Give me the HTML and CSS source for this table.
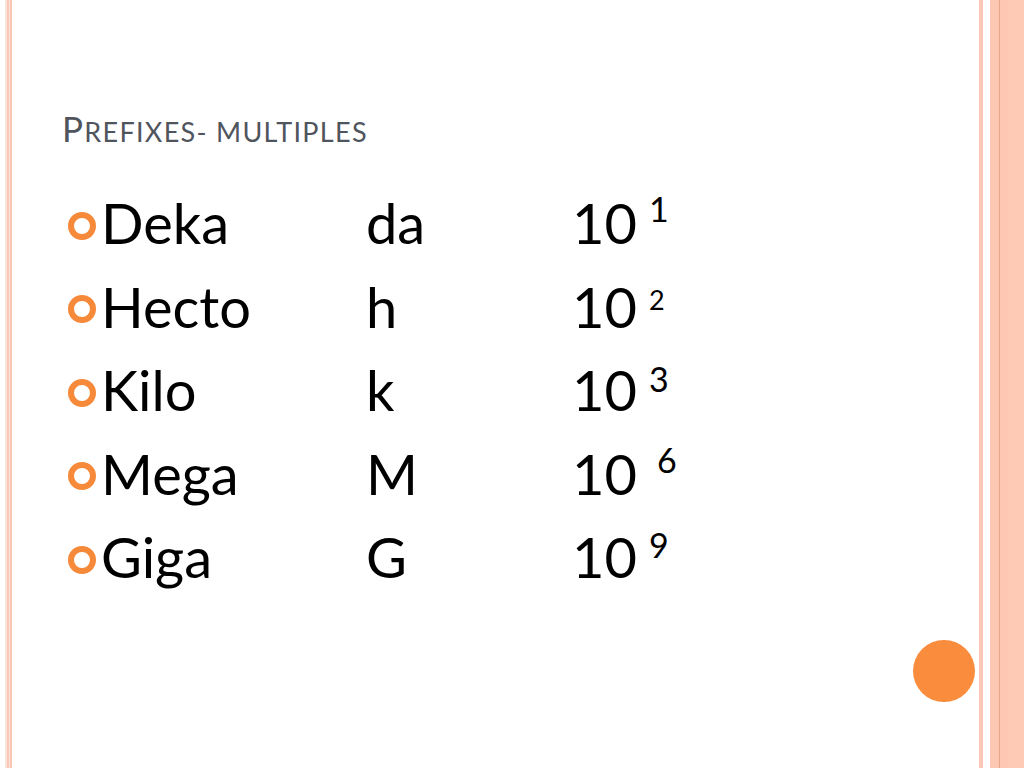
FILE: index.html
```html
<!DOCTYPE html>
<html>
<head>
<meta charset="utf-8">
<link rel="stylesheet" href="styles.css">
</head>
<body>
<div class="slide">
  <div class="edge-left"><span class="s1"></span><span class="s2"></span><span class="s3"></span><span class="s4"></span></div>
  <main class="content">
    <h1 class="title"><span class="big">P</span>refixes- multiples</h1>
    <ul class="list">
      <li class="row"><span class="name"><i class="dot"></i>Deka</span><span class="sym">da</span><span class="pow">10<sup class="e e1">1</sup></span></li>
      <li class="row"><span class="name"><i class="dot"></i>Hecto</span><span class="sym">h</span><span class="pow">10<sup class="e e2">2</sup></span></li>
      <li class="row"><span class="name"><i class="dot"></i>Kilo</span><span class="sym">k</span><span class="pow">10<sup class="e e3">3</sup></span></li>
      <li class="row"><span class="name"><i class="dot"></i>Mega</span><span class="sym">M</span><span class="pow">10<sup class="e e6">6</sup></span></li>
      <li class="row"><span class="name"><i class="dot"></i>Giga</span><span class="sym">G</span><span class="pow">10<sup class="e e9">9</sup></span></li>
    </ul>
  </main>
  <div class="corner"><span class="ball"></span></div>
  <div class="edge-right"><span class="r1"></span><span class="r2"></span><span class="r3"></span><span class="r4"></span><span class="r5"></span><span class="r6"></span></div>
</div>
</body>
</html>
```
FILE: styles.css
```css
html, body {
  margin: 0;
  padding: 0;
  background: #ffffff;
}
.slide {
  width: 1024px;
  height: 768px;
  display: flex;
  overflow: hidden;
  background: #ffffff;
  font-family: Lato, "Open Sans", sans-serif;
}
.edge-left {
  display: flex;
  width: 12px;
  flex: none;
  padding-left: 5px;
  box-sizing: border-box;
}
.edge-left span { display: block; height: 100%; }
.s1 { width: 2px; background: #fbe6da; }
.s2 { width: 2px; background: #fcc7b9; }
.s3 { width: 1px; background: #fbe6da; }
.s4 { width: 2px; background: #fdc7b8; }

.content {
  flex: 1;
  padding-left: 50px;
  padding-top: 108px;
}
.title {
  margin: 0;
  font-weight: 400;
  font-size: 27px;
  line-height: 40px;
  height: 40px;
  color: #50545d;
  text-transform: uppercase;
  letter-spacing: 1.3px;
  white-space: nowrap;
}
.title .big { font-size: 35px; }

.list {
  list-style: none;
  margin: 33px 0 0 0;
  padding: 0;
}
.row {
  display: grid;
  grid-template-columns: 304px 206px auto;
  height: 83.5px;
  line-height: 83.5px;
  font-size: 56px;
  color: #000000;
}
.name {
  display: flex;
  align-items: center;
}
.dot {
  display: block;
  width: 28px;
  height: 28px;
  box-sizing: border-box;
  border: 6.5px solid #f7893a;
  border-radius: 50%;
  margin-left: 6px;
  margin-right: 5px;
  margin-top: 6px;
}
.pow { white-space: nowrap; }
.e {
  font-size: 34px;
  line-height: 0;
  margin-left: 12px;
}
.e1 { vertical-align: 22px; }
.e2 { vertical-align: 18px; font-size: 27px; }
.e3 { vertical-align: 19px; }
.e6 { vertical-align: 22px; margin-left: 20px; }
.e9 { vertical-align: 20px; }

.corner {
  width: 0;
  flex: none;
  position: relative;
}
.ball {
  position: absolute;
  left: -66px;
  top: 640px;
  width: 62px;
  height: 62px;
  border-radius: 50%;
  background: #f98c3d;
}
.edge-right {
  display: flex;
  flex: none;
  width: 45px;
}
.edge-right span { display: block; height: 100%; }
.r1 { width: 4px; background: #fcc6b6; }
.r2 { width: 7px; background: #ffffff; }
.r3 { width: 9px; background: #fdc8b3; }
.r4 { width: 1px; background: #e9a58a; }
.r5 { width: 8px; background: #fdc7b3; }
.r6 { width: 16px; background: #fecab5; }
```
